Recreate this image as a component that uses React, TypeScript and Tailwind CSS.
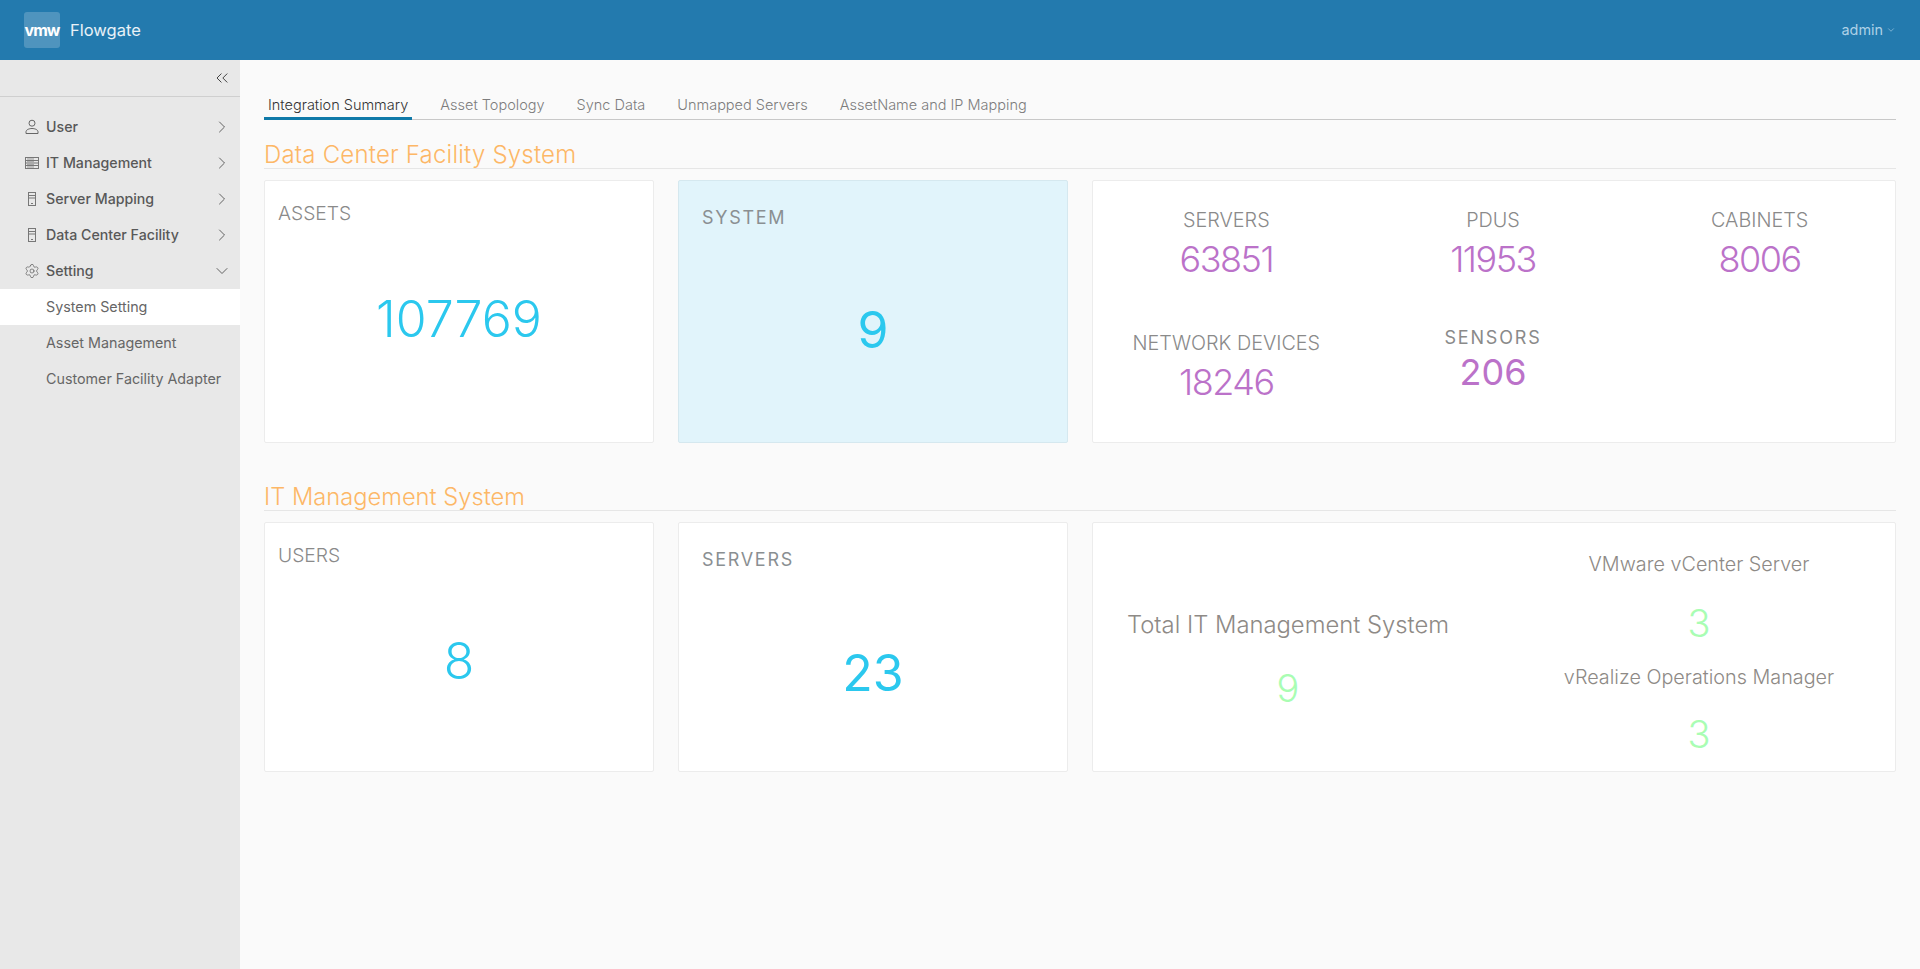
import { ChevronDown, ChevronRight, ChevronsLeft, Settings } from "lucide-react";

function UserIcon() {
  return (
    <svg width="16" height="16" viewBox="0 0 16 16" fill="none" stroke="#666" strokeWidth="1">
      <circle cx="8" cy="4.2" r="3" />
      <path d="M2 14.5v-1.7c0-2 3-3.3 6-3.3s6 1.3 6 3.3v1.7z" />
    </svg>
  );
}

function ListIcon() {
  return (
    <svg width="16" height="14" viewBox="0 0 16 14" fill="none" stroke="#777" strokeWidth="1">
      <rect x="1.5" y="1.5" width="13" height="11" />
      <path d="M2 4.5h12M2 7h12M2 9.5h12" />
      <path d="M3 3h7M3 5.8h7M3 8.3h7M3 11h7" stroke="#999" />
    </svg>
  );
}

function TowerIcon() {
  return (
    <svg width="16" height="16" viewBox="0 0 16 16" fill="none" stroke="#777" strokeWidth="1">
      <rect x="4.5" y="1.5" width="7" height="13" />
      <path d="M5 4.5h6M5 7h6" />
      <path d="M7 12.5h2" />
    </svg>
  );
}

const menu = [
  { label: "User", icon: <UserIcon /> },
  { label: "IT Management", icon: <ListIcon /> },
  { label: "Server Mapping", icon: <TowerIcon /> },
  { label: "Data Center Facility", icon: <TowerIcon /> },
];

const tabs = ["Integration Summary", "Asset Topology", "Sync Data", "Unmapped Servers", "AssetName and IP Mapping"];

function Sidebar() {
  return (
    <aside className="w-[240px] shrink-0 bg-[#e8e8e8]">
      <div className="h-[37px] flex items-center justify-end pr-[8px] border-b border-[#cfcfcf]">
        <ChevronsLeft size={20} strokeWidth={1.1} color="#333" />
      </div>
      <nav className="pt-[12px]">
        {menu.map((m) => (
          <div key={m.label} className="h-[36px] flex items-center pl-[24px] pr-[8px] text-[14.2px] font-medium text-[#585858]">
            <span className="w-[22px] flex justify-start">{m.icon}</span>
            <span>{m.label}</span>
            <ChevronRight size={20} strokeWidth={1.1} color="#555" className="ml-auto" />
          </div>
        ))}
        <div className="h-[36px] flex items-center pl-[24px] pr-[8px] text-[14.2px] font-medium text-[#585858]">
          <span className="w-[22px] flex justify-start">
            <Settings size={16} strokeWidth={1} color="#555" />
          </span>
          <span>Setting</span>
          <ChevronDown size={20} strokeWidth={1.1} color="#555" className="ml-auto" />
        </div>
        <div className="h-[36px] flex items-center pl-[46px] text-[14.3px] text-[#666] bg-white">System Setting</div>
        <div className="h-[36px] flex items-center pl-[46px] text-[14.3px] text-[#666]">Asset Management</div>
        <div className="h-[36px] flex items-center pl-[46px] text-[14.3px] text-[#666]">Customer Facility Adapter</div>
      </nav>
    </aside>
  );
}

function Card({ children, className = "" }: { children: React.ReactNode; className?: string }) {
  return <div className={`border border-[#ececec] rounded-[2px] bg-white ${className}`}>{children}</div>;
}

function Stat({ label, value, className = "" }: { label: string; value: string; className?: string }) {
  return (
    <div className={`flex flex-col items-center ${className}`}>
      <div className="text-[19.8px] leading-[24px] font-light text-[#8a8a8a]">{label}</div>
      <div className="text-[36px] leading-[44px] font-light text-[#bb72c9] tracking-[-1.5px] mt-[5px]">{value}</div>
    </div>
  );
}

function Title({ children, className = "" }: { children: React.ReactNode; className?: string }) {
  return (
    <div className={`h-[32px] border-b border-[#e6e6e6] pt-[4px] leading-[28px] font-light text-[#fdb766] ${className}`}>
      {children}
    </div>
  );
}

export default function App() {
  return (
    <div className="min-h-[969px] flex flex-col bg-[#fafafa] font-['Inter','Liberation_Sans',sans-serif]">
      <header className="h-[60px] bg-[#237aae] flex items-center pl-[24px] pr-[24px]">
        <div className="w-[36px] h-[36px] rounded-[3px] bg-white/20 flex items-center justify-center text-white text-[16px] font-bold tracking-[-1px]">
          vmw
        </div>
        <div className="ml-[10px] text-[16.5px] text-white/90">Flowgate</div>
        <div className="ml-auto flex items-center text-[14.4px] text-[#aed1e7]">
          admin
          <ChevronDown size={10} strokeWidth={1.5} className="ml-[3px]" />
        </div>
      </header>
      <div className="flex flex-1">
        <Sidebar />
        <main className="flex-1 pl-[24px] pr-[24px] pt-[25px]">
          <div className="flex border-b border-[#c8c8c8] h-[35px] text-[14.5px] font-light text-[#7d7d7d]">
            {tabs.map((t, i) => (
              <div
                key={t}
                className={
                  i === 0
                    ? "h-[35px] px-[4px] mr-[24px] pt-[9px] border-b-[3px] border-[#0f79a8] text-[#333]"
                    : "px-[4px] mr-[24px] pt-[9px]"
                }
              >
                {t}
              </div>
            ))}
          </div>
          <div className="mt-[17px]">
            <Title className="text-[24px] tracking-[0.2px]">Data Center Facility System</Title>
            <div className="grid grid-cols-[390px_390px_1fr] gap-[24px] mt-[11px] h-[263px]">
              <Card className="flex flex-col">
                <div className="pl-[13px] pt-[20px] text-[19.3px] leading-[24px] font-light text-[#8a8a8a]">ASSETS</div>
                <div className="text-center mt-[64px] text-[50px] leading-[60px] font-light text-[#2bc8ee]">107769</div>
              </Card>
              <Card className="!bg-[#e1f4fb] !border-[#d5e8ef] flex flex-col">
                <div className="pl-[23px] pt-[25px] text-[18px] leading-[24px] tracking-[1.7px] text-[#8a8f92]">SYSTEM</div>
                <div className="text-center mt-[70px] text-[50px] leading-[60px] text-[#2bc8ee]">9</div>
              </Card>
              <Card className="grid grid-cols-3 content-start pt-[27px] pr-[2px]">
                <Stat label="SERVERS" value="63851" />
                <Stat label="PDUS" value="11953" />
                <Stat label="CABINETS" value="8006" />
                <Stat label="NETWORK DEVICES" value="18246" className="mt-[50px]" />
                <div className="flex flex-col items-center mt-[45px]">
                  <div className="text-[18px] leading-[24px] tracking-[1.8px] text-[#8a8a8a]">SENSORS</div>
                  <div className="text-[36px] leading-[44px] text-[#bb72c9]">206</div>
                </div>
              </Card>
            </div>
          </div>
          <div className="mt-[36px]">
            <Title className="text-[23.7px]">IT Management System</Title>
            <div className="grid grid-cols-[390px_390px_1fr] gap-[24px] mt-[11px] h-[250px]">
              <Card className="flex flex-col">
                <div className="pl-[13px] pt-[20px] text-[19.3px] leading-[24px] font-light text-[#8a8a8a]">USERS</div>
                <div className="text-center mt-[64px] text-[50px] leading-[60px] font-light text-[#2bc8ee]">8</div>
              </Card>
              <Card className="flex flex-col">
                <div className="pl-[23px] pt-[25px] text-[18px] leading-[24px] tracking-[1.7px] text-[#8a8f92]">SERVERS</div>
                <div className="text-center mt-[71px] text-[50px] leading-[60px] text-[#2bc8ee]">23</div>
              </Card>
              <Card className="grid grid-cols-[390px_1fr] gap-[20px]">
                <div className="flex flex-col items-center pt-[87px]">
                  <div className="text-[23.8px] leading-[30px] font-light text-[#8e8a86]">Total IT Management System</div>
                  <div className="text-[38px] leading-[44px] font-light text-[#a9fdb3] mt-[26px]">9</div>
                </div>
                <div className="flex flex-col items-center pt-[29px]">
                  <div className="text-[19.8px] leading-[24px] font-light text-[#8e8a86]">VMware vCenter Server</div>
                  <div className="text-[38px] leading-[44px] font-light text-[#a9fdb3] mt-[25px]">3</div>
                  <div className="text-[19.8px] leading-[24px] font-light text-[#8e8a86] mt-[20px]">vRealize Operations Manager</div>
                  <div className="text-[38px] leading-[44px] font-light text-[#a9fdb3] mt-[23px]">3</div>
                </div>
              </Card>
            </div>
          </div>
        </main>
      </div>
    </div>
  );
}
